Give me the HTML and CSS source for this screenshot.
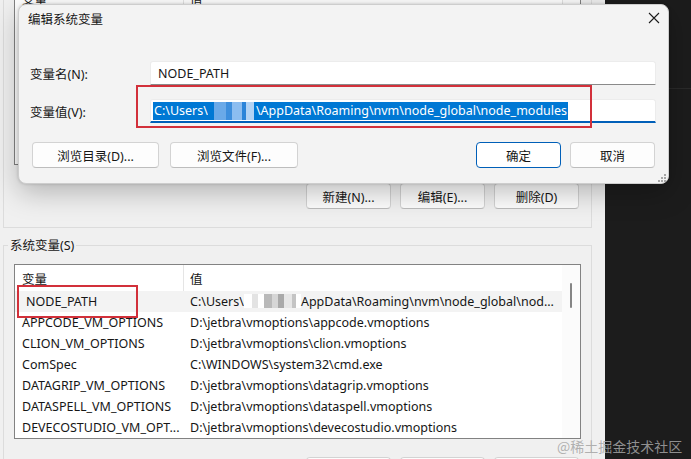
FILE: index.html
```html
<!DOCTYPE html>
<html>
<head>
    <meta charset="utf-8">
    <title>编辑系统变量</title>
    <link rel="stylesheet" href="styles.css">
</head>
<body>
<div class="screen">
    <div class="window">
        <div class="group group-user">
            <div class="list list-user">
                <div class="list-main">
                    <div class="list-head">
                        <div class="cell-name">变量</div>
                        <div class="cell-value">值</div>
                    </div>
                </div>
                <div class="scrollbar"></div>
            </div>
            <div class="button-row">
                <button class="btn">新建(N)...</button>
                <button class="btn">编辑(E)...</button>
                <button class="btn">删除(D)</button>
            </div>
        </div>

        <fieldset class="group group-system">
            <legend>系统变量(S)</legend>
            <div class="list list-system">
                <div class="list-main">
                    <div class="list-head">
                        <div class="cell-name">变量</div>
                        <div class="cell-value">值</div>
                    </div>
                    <div class="list-row current">
                        <div class="cell-name"><span class="nudge">NODE_PATH</span></div>
                        <div class="cell-value">C:\Users\<span class="blur-grey"></span>AppData\Roaming\nvm\node_global\nod...</div>
                    </div>
                    <div class="list-row">
                        <div class="cell-name">APPCODE_VM_OPTIONS</div>
                        <div class="cell-value">D:\jetbra\vmoptions\appcode.vmoptions</div>
                    </div>
                    <div class="list-row">
                        <div class="cell-name">CLION_VM_OPTIONS</div>
                        <div class="cell-value">D:\jetbra\vmoptions\clion.vmoptions</div>
                    </div>
                    <div class="list-row">
                        <div class="cell-name">ComSpec</div>
                        <div class="cell-value">C:\WINDOWS\system32\cmd.exe</div>
                    </div>
                    <div class="list-row">
                        <div class="cell-name">DATAGRIP_VM_OPTIONS</div>
                        <div class="cell-value">D:\jetbra\vmoptions\datagrip.vmoptions</div>
                    </div>
                    <div class="list-row">
                        <div class="cell-name">DATASPELL_VM_OPTIONS</div>
                        <div class="cell-value">D:\jetbra\vmoptions\dataspell.vmoptions</div>
                    </div>
                    <div class="list-row">
                        <div class="cell-name">DEVECOSTUDIO_VM_OPT...</div>
                        <div class="cell-value">D:\jetbra\vmoptions\devecostudio.vmoptions</div>
                    </div>
                </div>
                <div class="scrollbar"><div class="thumb"></div></div>
            </div>
            <div class="button-row">
                <button class="btn">新建(W)...</button>
                <button class="btn">编辑(I)...</button>
                <button class="btn">删除(L)</button>
            </div>
        </fieldset>
    </div>
    <div class="desktop"><div class="desktop-line"></div></div>
</div>

<div class="dialog">
    <div class="dialog-title">
        <span>编辑系统变量</span>
        <svg class="close" width="12" height="12" viewBox="0 0 12 12">
            <path d="M1 1 L11 11 M11 1 L1 11" stroke="#1b1b1b" stroke-width="1.1" fill="none"/>
        </svg>
    </div>
    <div class="dialog-form">
        <div class="field">
            <label class="field-label">变量名(N):</label>
            <div class="field-input">NODE_PATH</div>
        </div>
        <div class="field">
            <label class="field-label">变量值(V):</label>
            <div class="field-input focused"><span class="selected">C:\Users\<span class="blur-blue"></span>\AppData\Roaming\nvm\node_global\node_modules</span></div>
        </div>
        <div class="dialog-buttons">
            <button class="btn wide">浏览目录(D)...</button>
            <button class="btn wide">浏览文件(F)...</button>
            <span class="spacer"></span>
            <button class="btn default">确定</button>
            <button class="btn">取消</button>
        </div>
    </div>
    <svg class="grip" width="9" height="9" viewBox="0 0 9 9">
        <rect x="7" y="1" width="2" height="2" fill="#a6a6a6"/>
        <rect x="4" y="4" width="2" height="2" fill="#a6a6a6"/>
        <rect x="7" y="4" width="2" height="2" fill="#a6a6a6"/>
        <rect x="1" y="7" width="2" height="2" fill="#a6a6a6"/>
        <rect x="4" y="7" width="2" height="2" fill="#a6a6a6"/>
        <rect x="7" y="7" width="2" height="2" fill="#a6a6a6"/>
    </svg>
</div>

<div class="mark mark-value"></div>
<div class="mark mark-name"></div>
<div class="watermark">@稀土掘金技术社区</div>
</body>
</html>
```

FILE: styles.css
```css
* {
    box-sizing: border-box;
}

body {
    margin: 0;
    background: #1c1c1c;
    font-family: "Noto Sans", "Noto Sans CJK SC", sans-serif;
    font-size: 12.5px;
    color: #161616;
}

.screen {
    display: flex;
    width: 691px;
    height: 459px;
    overflow: hidden;
}

/* the environment variables window behind */
.window {
    width: 605px;
    height: 459px;
    background: #f0f0f0;
    padding-left: 3px;
    overflow: hidden;
}

.desktop {
    flex: 1;
}

.desktop-line {
    margin-top: 88px;
    height: 1px;
    background: #2a2a2a;
}

.group {
    width: 589px;
    border: 1px solid #dcdcdc;
}

.group-user {
    border-top: none;
    padding: 0 10px 18px 10px;
}

.group-system {
    margin: 9px 0 0 0;
    padding: 0 10px 0 4px;
    min-width: 0;
}

.group-system legend {
    padding: 0 2px;
    line-height: 17px;
}

.list {
    display: flex;
    width: 567px;
    background: #fff;
    border: 1px solid #828282;
}

.list-user {
    margin-top: -16px;
    height: 181px;
}

.list-system {
    margin-left: 6px;
    margin-top: 10px;
}

.list-main {
    flex: 1;
    min-width: 0;
}

.list-head,
.list-row {
    display: flex;
    align-items: center;
    white-space: nowrap;
}

.list-head {
    height: 26px;
}

.list-row {
    height: 21px;
}

.list-row.current {
    background: #f3f3f3;
}

.cell-name {
    width: 168px;
    padding-left: 7px;
    overflow: hidden;
}

.cell-value {
    flex: 1;
    padding-left: 7px;
    overflow: hidden;
}

.list-head .cell-value {
    height: 100%;
    display: flex;
    align-items: center;
    padding-left: 6px;
    border-left: 1px solid #e5e5e5;
}

.nudge {
    padding-left: 4px;
}

.blur-grey {
    display: inline-block;
    width: 57px;
    height: 14px;
    vertical-align: -2px;
    background: linear-gradient(90deg, #fff 0 8px, #e3e3e3 8px 14px, #fff 14px 20px, #b9b9b9 20px 28px, #d6d6d6 28px 34px, #a9a9a9 34px 40px, #e6e6e6 40px 48px, #c4c4c4 48px 52px, #fff 52px);
}

.scrollbar {
    position: relative;
    width: 18px;
    flex: none;
    background: #fbfbfb;
}

.list-user .scrollbar {
    border-left: 1px solid #e2e2e2;
}

.thumb {
    position: absolute;
    left: 8px;
    top: 18px;
    width: 2px;
    height: 25px;
    border-radius: 1px;
    background: #858585;
}

.button-row {
    display: flex;
    justify-content: flex-end;
    gap: 9px;
    margin-top: 18px;
    padding-right: 2px;
}

.btn {
    width: 85px;
    height: 26px;
    padding: 0;
    font: inherit;
    color: #161616;
    background: #fdfdfd;
    border: 1px solid #d3d3d3;
    border-bottom-color: #bdbdbd;
    border-radius: 4px;
}

/* edit dialog on top */
.dialog {
    position: absolute;
    left: 18px;
    top: 4px;
    width: 651px;
    height: 180px;
    background: #f3f3f3;
    border: 1px solid #cdcdcd;
    border-radius: 8px;
    box-shadow: 0 8px 28px rgba(0, 0, 0, 0.26), 0 0 3px rgba(0, 0, 0, 0.18);
}

.dialog-title {
    display: flex;
    justify-content: space-between;
    align-items: center;
    height: 26px;
    padding: 0 8px 0 9px;
}

.dialog-form {
    margin-top: 30px;
    padding: 0 12px 0 11px;
}

.field {
    display: flex;
    align-items: center;
}

.field + .field {
    margin-top: 14px;
}

.field-label {
    width: 120px;
}

.field-input {
    flex: 1;
    display: flex;
    align-items: center;
    height: 24px;
    padding-left: 7px;
    background: #fff;
    border: 1px solid #ececec;
    border-bottom-color: #8a8a8a;
    border-radius: 3px 3px 0 0;
    white-space: nowrap;
}

.field-input.focused {
    padding-left: 2px;
    border-bottom: 2px solid #005fb8;
}

.selected {
    line-height: 18px;
    padding: 0 1px;
    color: #fff;
    background: #0078d4;
}

.blur-blue {
    display: inline-block;
    width: 48px;
    height: 18px;
    vertical-align: top;
    background: linear-gradient(90deg, #0078d4 0 6px, #6aa9e8 6px 18px, #3d8edd 18px 24px, #8cbdf0 24px 34px, #2b84d9 34px 38px, #b3d3f4 38px 46px, #0078d4 46px);
}

.dialog-buttons {
    display: flex;
    margin-top: 19px;
    padding: 0 1px 0 2px;
}

.dialog-buttons .wide {
    width: 127px;
    margin-right: 11px;
}

.dialog-buttons .wide + .wide {
    width: 128px;
}

.spacer {
    flex: 1;
}

.dialog-buttons .default {
    margin-right: 9px;
    border: 1px solid #005fb8;
    background: #fff;
}

.grip {
    position: absolute;
    right: 2px;
    bottom: 1px;
}

/* red annotation boxes */
.mark {
    position: absolute;
    border: 2px solid #d2303a;
}

.mark-value {
    left: 136px;
    top: 85px;
    width: 456px;
    height: 43px;
}

.mark-name {
    left: 17px;
    top: 285px;
    width: 121px;
    height: 33px;
}

.watermark {
    position: absolute;
    left: 557px;
    top: 436px;
    font-family: "Noto Sans CJK SC", sans-serif;
    font-size: 14px;
    color: rgba(165, 165, 165, 0.85);
}
```
